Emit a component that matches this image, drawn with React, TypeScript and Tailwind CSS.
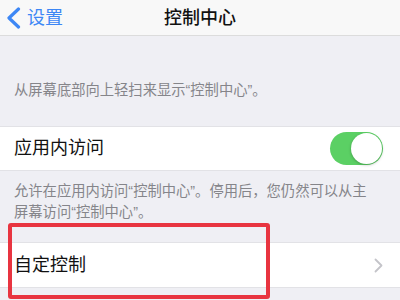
import React from 'react'

const font = { fontFamily: '"Liberation Sans", "Noto Sans CJK SC", sans-serif' }

function Toggle() {
  return (
    <div className="relative w-[53px] h-[33px] rounded-full bg-[#5bd064]">
      <div className="absolute right-[1px] top-[1px] w-[31px] h-[31px] rounded-full bg-white shadow-[0_1px_3px_rgba(0,0,0,0.25)]" />
    </div>
  )
}

export default function App() {
  return (
    <div className="relative w-[400px] h-[300px] overflow-hidden bg-[#efeff4]" style={font}>
      {/* Nav bar */}
      <div className="relative h-[36px] bg-[#f8f8f8] border-b border-[#dcdcdc] flex items-center">
        <div className="flex items-center pl-[6px] gap-[6px]">
          <svg width="15" height="22" viewBox="0 0 15 22" fill="none">
            <path d="M12.5 2 L3 11 L12.5 20" stroke="#3d87f5" strokeWidth="3.2" strokeLinecap="round" strokeLinejoin="round" />
          </svg>
          <span className="text-[18px] leading-[22px] text-[#3d87f5]">设置</span>
        </div>
        <span className="absolute left-1/2 -translate-x-1/2 text-[18px] leading-[22px] font-medium text-[#111]">
          控制中心
        </span>
      </div>

      <div className="pt-[44px] pb-[26px] px-[14px]">
        <p className="text-[14.3px] leading-[20px] text-[#85858a] whitespace-nowrap">
          从屏幕底部向上轻扫来显示“控制中心”。
        </p>
      </div>

      <div className="h-[45px] bg-white border-y border-[#e2e2e6] flex items-center justify-between pl-[14px] pr-[17px]">
        <span className="text-[18px] text-[#111]">应用内访问</span>
        <Toggle />
      </div>

      <div className="pt-[10px] pb-[19px] px-[14px]">
        <p className="text-[14.3px] leading-[21px] text-[#85858a] whitespace-nowrap">
          允许在应用内访问“控制中心”。停用后，您仍然可以从主
          <br />
          屏幕访问“控制中心”。
        </p>
      </div>

      <div className="h-[46px] bg-white border-y border-[#e2e2e6] flex items-center justify-between pl-[14px] pr-[17px]">
        <span className="text-[18px] text-[#111]">自定控制</span>
        <svg width="9" height="15" viewBox="0 0 9 15" fill="none">
          <path d="M1.5 1.5 L7.5 7.5 L1.5 13.5" stroke="#c4c4c9" strokeWidth="1.8" strokeLinecap="round" strokeLinejoin="round" />
        </svg>
      </div>

      {/* Red highlight box */}
      <div className="absolute left-[8px] top-[223px] w-[262px] h-[76px] border-[4px] border-[#e83440] rounded-[3px]" />
    </div>
  )
}
